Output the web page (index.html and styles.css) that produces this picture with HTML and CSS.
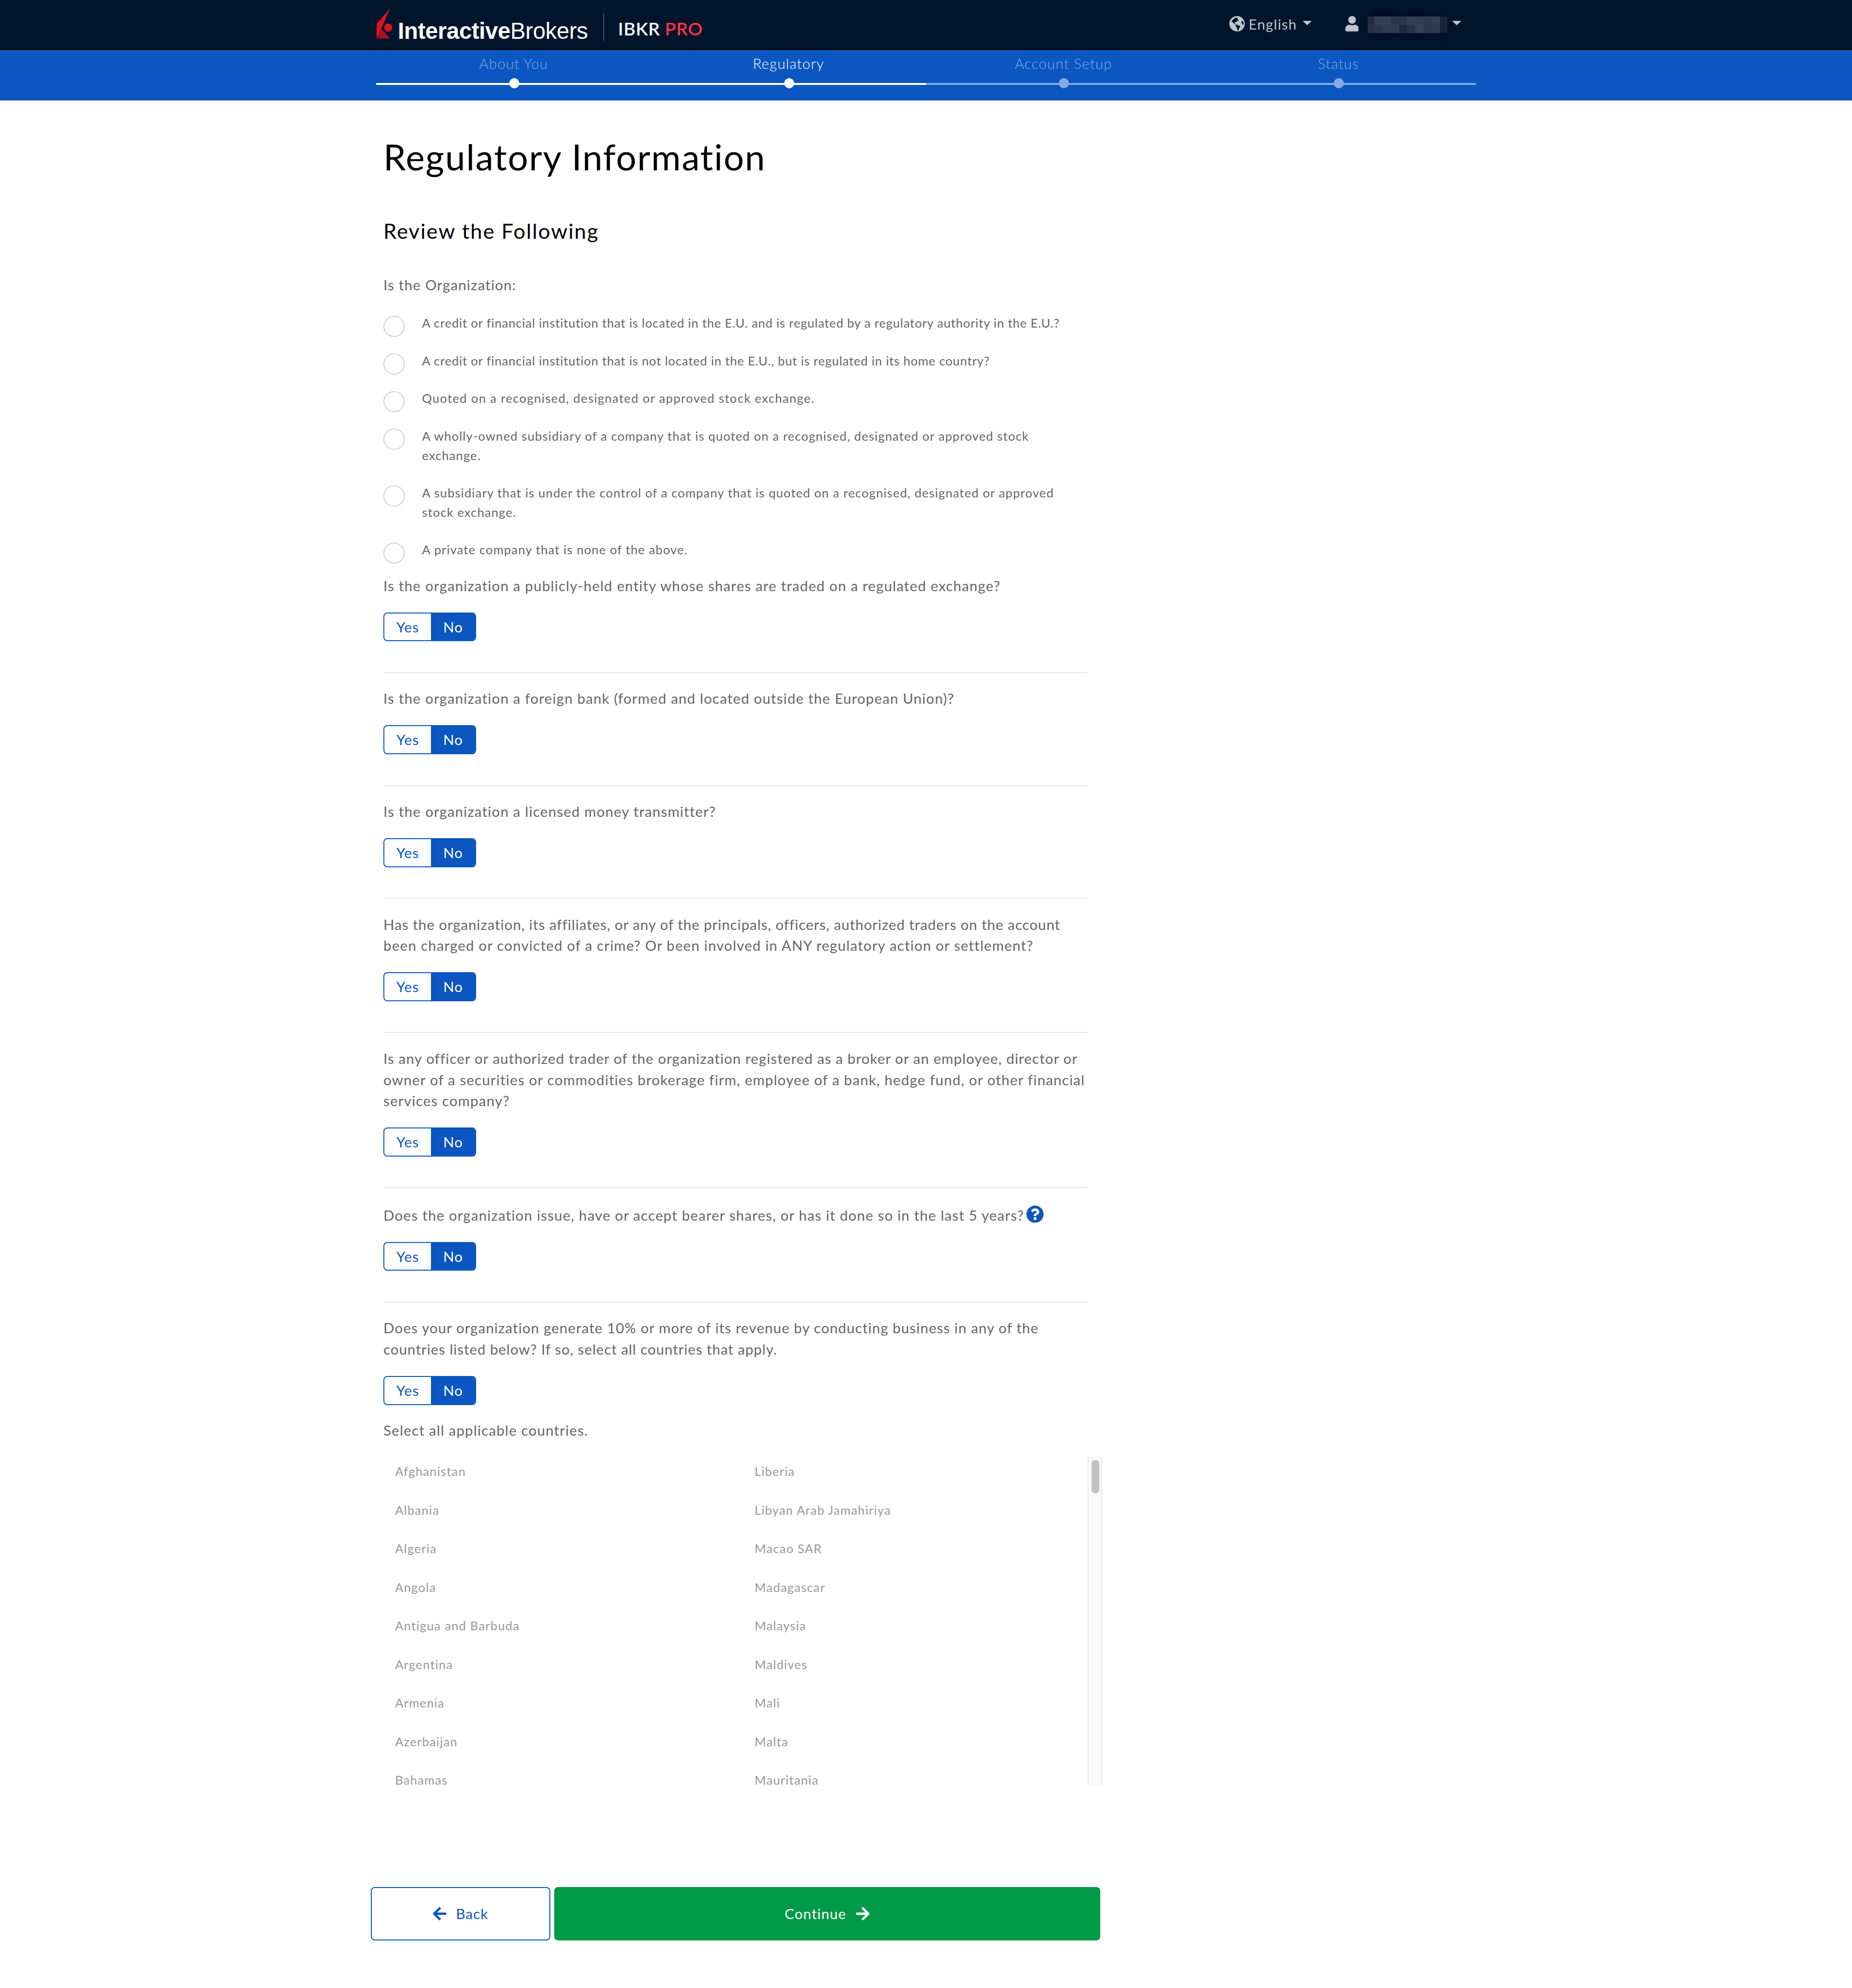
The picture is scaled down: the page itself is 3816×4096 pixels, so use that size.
FILE: index.html
```html
<!DOCTYPE html>
<html lang="en">
<head>
<meta charset="utf-8">
<title>Regulatory Information</title>
<link rel="stylesheet" href="styles.css">
</head>
<body>
<svg class="defs" aria-hidden="true">
  <symbol id="arrow-left" viewBox="0 0 448 512"><path d="M257.5 445.1l-22.2 22.2c-9.4 9.4-24.6 9.4-33.9 0L7 273c-9.4-9.4-9.4-24.6 0-33.9L201.4 44.7c9.4-9.4 24.6-9.4 33.9 0l22.2 22.2c9.5 9.5 9.3 25-.4 34.3L136.6 216H424c13.3 0 24 10.7 24 24v32c0 13.3-10.7 24-24 24H136.6l120.5 114.8c9.8 9.3 10 24.8.4 34.3z"/></symbol>
</svg>

<header class="topbar">
  <div class="container topbar-inner">
    <svg class="logo-mark" viewBox="0 0 33 63">
      <defs><linearGradient id="fold" x1="0" y1="0.6" x2="1" y2="0.4"><stop offset="0" stop-color="#8d0f1c"/><stop offset="1" stop-color="#d81222"/></linearGradient></defs>
      <path fill="#db1222" d="M0 32.3 28 0 9.7 42.4 0 63z"/>
      <path fill="url(#fold)" d="M9.7 42.4 27.7 63H0z"/>
      <circle fill="#db1222" cx="24" cy="40" r="8.4"/>
    </svg>
    <div class="wordmark"><b>Interactive</b><span>Brokers</span></div>
    <div class="divider"></div>
    <div class="product">IBKR <span class="pro">PRO</span></div>
    <div class="language">
      <svg class="globe" viewBox="57 70 94 94">
        <circle class="land" cx="104" cy="117" r="47"/>
        <path class="sea" d="M71 104Q75 92 90 85L92 79 98 82 106 80 109 86 106 91 113 95 112 101 104 99 100 107 91 108 88 112 93 117 100 122 92 121 84 115 78 108Z"/>
        <path class="sea" d="M95 124 104 122 112 127 123 130Q123 138 117 145L112 156 107 157 104 149 103 139 96 133Z"/>
        <path class="sea" d="M131 103 138 99Q146 110 143 122L136 122 131 113Z"/>
      </svg>
      <span class="language-name">English</span>
      <svg class="caret" viewBox="0 0 19 9"><path d="M0 0H19L9.5 9z"/></svg>
    </div>
    <div class="account">
      <svg class="user" viewBox="0 0 448 512"><path d="M224 256c70.7 0 128-57.3 128-128S294.7 0 224 0 96 57.3 96 128s57.3 128 128 128zm89.6 32h-16.7c-22.2 10.2-46.9 16-72.9 16s-50.6-5.8-72.9-16h-16.7C60.2 288 0 348.2 0 422.4V464c0 26.5 21.5 48 48 48h352c26.5 0 48-21.5 48-48v-41.6c0-74.2-60.2-134.4-134.4-134.4z"/></svg>
      <svg class="redacted" viewBox="0 0 165 68" shape-rendering="crispEdges">
        <path fill="#00112a" d="M0 3h165v14H0zM0 51h165v17H0z"/>
        <path fill="#000d27" d="M14 3h34v14H14zM82 3h34v14H82zM14 51h34v17H14zM82 51h34v17H82z"/>
        <path fill="#222c44" d="M0 17h14v17H0z"/><path fill="#343f55" d="M14 17h34v17H14z"/><path fill="#2a354b" d="M48 17h17v17H48z"/><path fill="#2d384d" d="M65 17h17v17H65z"/><path fill="#353f55" d="M82 17h17v17H82z"/><path fill="#323d52" d="M99 17h17v17H99z"/><path fill="#2d384e" d="M116 17h17v17h-17z"/><path fill="#333e54" d="M133 17h17v17h-17z"/>
        <path fill="#25324a" d="M0 34h14v17H0z"/><path fill="#2a364d" d="M14 34h17v17H14z"/><path fill="#303c52" d="M31 34h34v17H31z"/><path fill="#1f2b44" d="M65 34h17v17H65z"/><path fill="#27344b" d="M82 34h17v17H82z"/><path fill="#354056" d="M99 34h17v17H99z"/><path fill="#2c384f" d="M116 34h17v17h-17z"/><path fill="#303b52" d="M133 34h17v17h-17z"/>
        <path fill="#17233c" d="M150 17h15v34h-15z"/>
      </svg>
      <svg class="caret" viewBox="0 0 19 9"><path d="M0 0H19L9.5 9z"/></svg>
    </div>
  </div>
</header>

<nav class="progress">
  <ol class="container steps">
    <li class="step done"><span>About You</span><i class="rail"></i></li>
    <li class="step done current"><span>Regulatory</span><i class="rail"></i></li>
    <li class="step"><span>Account Setup</span><i class="rail"></i></li>
    <li class="step"><span>Status</span><i class="rail"></i></li>
  </ol>
</nav>

<main class="content">
  <h1>Regulatory Information</h1>
  <h2>Review the Following</h2>

  <p class="prompt">Is the Organization:</p>
  <ul class="options">
    <li class="snug"><i class="radio"></i>A credit or financial institution that is located in the E.U. and is regulated by a regulatory authority in the E.U.?</li>
    <li class="snug"><i class="radio"></i>A credit or financial institution that is not located in the E.U., but is regulated in its home country?</li>
    <li class="loose"><i class="radio"></i>Quoted on a recognised, designated or approved stock exchange.</li>
    <li><i class="radio"></i>A wholly-owned subsidiary of a company that is quoted on a recognised, designated or approved stock<br>exchange.</li>
    <li><i class="radio"></i>A subsidiary that is under the control of a company that is quoted on a recognised, designated or approved<br>stock exchange.</li>
    <li><i class="radio"></i>A private company that is none of the above.</li>
  </ul>

  <section class="question">
    <p>Is the organization a publicly-held entity whose shares are traded on a regulated exchange?</p>
    <div class="toggle"><span class="yes">Yes</span><span class="no">No</span></div>
  </section>
  <section class="question">
    <p>Is the organization a foreign bank (formed and located outside the European Union)?</p>
    <div class="toggle"><span class="yes">Yes</span><span class="no">No</span></div>
  </section>
  <section class="question">
    <p>Is the organization a licensed money transmitter?</p>
    <div class="toggle"><span class="yes">Yes</span><span class="no">No</span></div>
  </section>
  <section class="question">
    <p><span class="tight">Has the organization, its affiliates, or any of the principals, officers, authorized traders on the account</span><br>been charged or convicted of a crime? Or been involved in ANY regulatory action or settlement?</p>
    <div class="toggle"><span class="yes">Yes</span><span class="no">No</span></div>
  </section>
  <section class="question">
    <p><span class="close">Is any officer or authorized trader of the organization registered as a broker or an employee, director or</span><br>owner of a securities or commodities brokerage firm, employee of a bank, hedge fund, or other financial<br>services company?</p>
    <div class="toggle"><span class="yes">Yes</span><span class="no">No</span></div>
  </section>
  <section class="question">
    <p class="with-help"><span>Does the organization issue, have or accept bearer shares, or has it done so in the last 5 years?</span><svg class="help" viewBox="8 8 496 496"><path d="M504 256c0 136.997-111.043 248-248 248S8 392.997 8 256C8 119.083 119.043 8 256 8s248 111.083 248 248zM262.655 90c-54.497 0-89.255 22.957-116.549 63.758-3.536 5.286-2.353 12.415 2.715 16.258l34.699 26.31c5.205 3.947 12.621 3.008 16.665-2.122 17.864-22.658 30.113-35.797 57.303-35.797 20.429 0 45.698 13.148 45.698 32.958 0 14.976-12.363 22.667-32.534 33.976C247.128 238.528 216 254.941 216 296v4c0 6.627 5.373 12 12 12h56c6.627 0 12-5.373 12-12v-1.333c0-28.462 83.186-29.647 83.186-106.667 0-58.002-60.165-102-116.531-102zM256 338c-25.365 0-46 20.635-46 46 0 25.364 20.635 46 46 46s46-20.636 46-46c0-25.364-20.635-46-46-46z"/></svg></p>
    <div class="toggle"><span class="yes">Yes</span><span class="no">No</span></div>
  </section>
  <section class="question last">
    <p><span class="close">Does your organization generate 10% or more of its revenue by conducting business in any of the</span><br><span class="tight">countries listed below? If so, select all countries that apply.</span></p>
    <div class="toggle"><span class="yes">Yes</span><span class="no">No</span></div>
  </section>

  <p class="prompt">Select all applicable countries.</p>
  <div class="countries">
    <ul><li>Afghanistan</li><li>Albania</li><li>Algeria</li><li>Angola</li><li>Antigua and Barbuda</li><li>Argentina</li><li>Armenia</li><li>Azerbaijan</li><li>Bahamas</li></ul>
    <ul><li>Liberia</li><li>Libyan Arab Jamahiriya</li><li>Macao SAR</li><li>Madagascar</li><li>Malaysia</li><li>Maldives</li><li>Mali</li><li>Malta</li><li>Mauritania</li></ul>
    <div class="scrollbar"><div class="thumb"></div></div>
  </div>
</main>

<footer class="actions">
  <div class="btn back"><svg class="arrow"><use href="#arrow-left"/></svg><span>Back</span></div>
  <div class="btn continue"><span>Continue</span><svg class="arrow flip"><use href="#arrow-left"/></svg></div>
</footer>
</body>
</html>
```
FILE: styles.css
```css
/* 1rem = 99.375px */
html { font-size: 99.375px; }
* { box-sizing: border-box; margin: 0; padding: 0; }
body {
  height: 4096px;
  overflow: hidden;
  background: #fff;
  color: #666;
  font-family: Lato, "Open Sans", sans-serif;
  font-size: 0.295rem;
  line-height: 0.44rem;
  letter-spacing: 0.012rem;
  white-space: nowrap;
}
ul, ol { list-style: none; }
svg { display: block; flex: none; }
.defs { display: none; }
.container { width: 22.8rem; margin: 0 auto; }

/* Top bar */
.topbar { height: 1.04rem; background: #00142b; border-bottom: 2px solid #000; }
.topbar-inner { display: flex; align-items: flex-start; }
.logo-mark { width: 0.33rem; height: 0.63rem; margin: 0.17rem 0 0 0.01rem; }
.wordmark {
  display: flex;
  width: 4.27rem;
  margin: 0.395rem 0 0 0.11rem;
  color: #fff;
  font: 0.475rem/0.5rem "Liberation Sans", Arial, sans-serif;
  letter-spacing: -0.004rem;
}
.divider { width: 2px; height: 0.58rem; margin: 0.27rem 0 0 -0.01rem; background: #434e60; }
.product { margin: 0.345rem 0 0 0.285rem; color: #fff; font-size: 0.375rem; font-weight: 600; line-height: 0.5rem; letter-spacing: 0.007rem; }
.pro { color: #ff3344; }
.language, .account { display: flex; align-items: flex-start; color: #bfc3ca; fill: #bfc3ca; line-height: 0.4rem; }
.language { margin-left: auto; }
.globe { width: 0.32rem; height: 0.32rem; margin-top: 0.33rem; }
.sea { fill: #00142b; }
.language-name { width: 1.12rem; margin: 0.301rem 0 0 0.08rem; }
.caret { width: 0.19rem; height: 0.09rem; margin-top: 0.43rem; }
.account { margin: 0 0.3rem 0 0.69rem; }
.user { width: 0.28rem; height: 0.32rem; margin-top: 0.33rem; }
.redacted { width: 1.65rem; height: 0.68rem; margin: 0.17rem 0.1rem 0 0.19rem; }

/* Application progress */
.progress { height: 1.04rem; background: #0b56c0; }
.steps { display: grid; grid-template-columns: repeat(4, 1fr); padding-top: 0.076rem; }
.step { --tone: #86abe0; color: var(--tone); text-align: center; font-weight: 300; line-height: 0.4rem; }
.done { --tone: #fff; color: #86abe0; }
.current { color: #fff; }
.step span { display: block; }
.rail {
  display: block;
  height: 0.21rem;
  margin-top: 0.106rem;
  background:
    radial-gradient(circle at 50.2% 50%, var(--tone) 0.1rem, transparent 0.107rem),
    linear-gradient(var(--tone), var(--tone)) 0 0.1rem / 100% 4px no-repeat;
}

/* Form */
.content { width: 14.9rem; margin: 0.665rem 0 0 7.95rem; }
h1, h2 { color: #000; font-weight: 400; }
h1 { font-size: 0.745rem; line-height: 1rem; letter-spacing: 0.019rem; }
h2 { margin: 0.74rem 0 0.6rem; font-size: 0.435rem; line-height: 0.6rem; letter-spacing: 0.0205rem; }
.options {
  display: grid;
  gap: 0.38rem;
  margin: 0.38rem 0 0.32rem;
  font-size: 0.256rem;
  line-height: 0.4rem;
  letter-spacing: 0.0115rem;
}
.options li { display: grid; grid-template-columns: 0.8rem 1fr; }
.radio { grid-row: span 2; width: 0.44rem; height: 0.44rem; margin: 0.043rem 0 -0.5rem; border: 2px solid #d5d1cc; border-radius: 50%; }
.question { width: 14.6rem; margin-bottom: 0.306rem; padding-bottom: 0.64rem; border-bottom: 2px solid #e4e4e4; }
.question.last { margin-bottom: 0.304rem; padding-bottom: 0; border-bottom: 0; }
.with-help { display: flex; align-items: flex-start; padding-top: 0.03rem; }
.help { width: 0.355rem; height: 0.355rem; margin: 0.022rem 0 0 0.045rem; fill: #0b56c0; }

/* Tracking adjustments for single lines */
.loose { letter-spacing: 0.0137rem; }
.snug { letter-spacing: 0.0085rem; }
.close { letter-spacing: 0.0112rem; }
.tight { letter-spacing: 0.0098rem; }

.toggle {
  display: flex;
  width: 1.92rem;
  height: 0.6rem;
  margin-top: 0.334rem;
  overflow: hidden;
  border: 2px solid #0b56c0;
  border-radius: 0.08rem;
  line-height: 0.56rem;
  text-align: center;
}
.yes { width: 0.97rem; color: #0b56c0; }
.no { flex: 1; background: #0b56c0; color: #fff; }

/* Country picker */
.countries {
  display: grid;
  grid-template-columns: 7.455rem 1fr 0.3rem;
  height: 6.8rem;
  margin-top: 0.336rem;
  padding-left: 0.24rem;
  color: #999;
  font-size: 0.256rem;
  line-height: 0.4rem;
}
.countries ul { display: grid; gap: 0.4rem; align-content: start; padding-top: 0.107rem; }
.scrollbar { height: 6.8rem; padding: 0.06rem 0 0 0.06rem; background: #fafafa; border: solid #e8e8e8; border-width: 0 2px; }
.thumb { width: 0.16rem; height: 0.7rem; border-radius: 0.08rem; background: #c1c1c1; }

/* Actions */
.actions { display: flex; gap: 0.08rem; width: 15.12rem; margin: 2.12rem 0 0 7.69rem; }
.btn { display: flex; align-items: center; justify-content: center; gap: 0.2rem; height: 1.1rem; border-radius: 0.08rem; }
.back { width: 3.72rem; border: 2px solid #0b56c0; color: #0b56c0; fill: #0b56c0; }
.continue { flex: 1; background: #009a48; color: #fff; fill: #fff; }
.arrow { width: 0.28rem; height: 0.32rem; }
.flip { transform: scaleX(-1); }
```
